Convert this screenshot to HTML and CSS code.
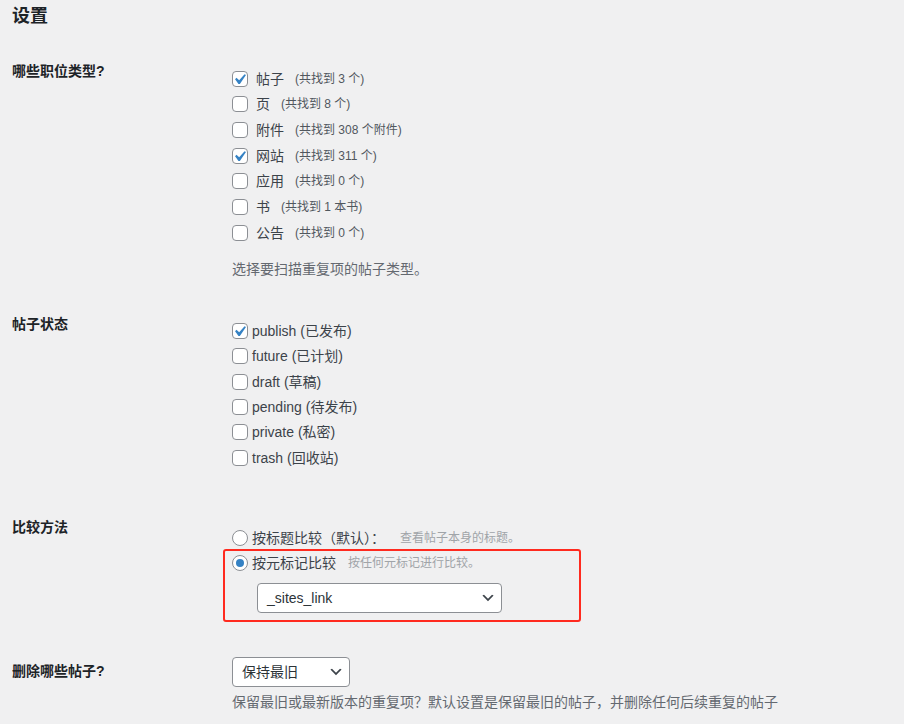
FILE: index.html
```html
<!DOCTYPE html>
<html lang="zh-CN">
<head>
<meta charset="utf-8">
<title>设置</title>
<link rel="stylesheet" href="styles.css">
</head>
<body>
<div class="page">
  <h1 class="title">设置</h1>

  <div class="row row-types">
    <div class="th">哪些职位类型?</div>
    <div class="td">
      <ul class="list list-types">
        <li class="item"><span class="cb checked"><svg viewBox="0 0 20 20"><path d="M14.83 4.89l1.34.94-5.81 8.38H9.02L5.78 9.67l1.34-1.250 2.57 2.4z"/></svg></span><span class="name">帖子</span><span class="count">(共找到 3 个)</span></li>
        <li class="item"><span class="cb"></span><span class="name">页</span><span class="count">(共找到 8 个)</span></li>
        <li class="item"><span class="cb"></span><span class="name">附件</span><span class="count">(共找到 308 个附件)</span></li>
        <li class="item"><span class="cb checked"><svg viewBox="0 0 20 20"><path d="M14.83 4.89l1.34.94-5.81 8.38H9.02L5.78 9.67l1.34-1.25 2.57 2.4z"/></svg></span><span class="name">网站</span><span class="count">(共找到 311 个)</span></li>
        <li class="item"><span class="cb"></span><span class="name">应用</span><span class="count">(共找到 0 个)</span></li>
        <li class="item"><span class="cb"></span><span class="name">书</span><span class="count">(共找到 1 本书)</span></li>
        <li class="item"><span class="cb"></span><span class="name">公告</span><span class="count">(共找到 0 个)</span></li>
      </ul>
      <p class="desc desc-types">选择要扫描重复项的帖子类型。</p>
    </div>
  </div>

  <div class="row row-status">
    <div class="th">帖子状态</div>
    <div class="td">
      <ul class="list list-status">
        <li class="item"><span class="cb checked"><svg viewBox="0 0 20 20"><path d="M14.83 4.89l1.34.94-5.81 8.38H9.02L5.78 9.67l1.34-1.25 2.57 2.4z"/></svg></span><span class="name">publish (已发布)</span></li>
        <li class="item"><span class="cb"></span><span class="name">future (已计划)</span></li>
        <li class="item"><span class="cb"></span><span class="name">draft (草稿)</span></li>
        <li class="item"><span class="cb"></span><span class="name">pending (待发布)</span></li>
        <li class="item"><span class="cb"></span><span class="name">private (私密)</span></li>
        <li class="item"><span class="cb"></span><span class="name">trash (回收站)</span></li>
      </ul>
    </div>
  </div>

  <div class="row row-compare">
    <div class="th">比较方法</div>
    <div class="td">
      <div class="radio-item"><span class="rd"></span><span class="name">按标题比较（默认）：</span><span class="hint hint-first">查看帖子本身的标题。</span></div>
      <div class="highlight">
        <div class="radio-item"><span class="rd checked"><span class="dot"></span></span><span class="name">按元标记比较</span><span class="hint">按任何元标记进行比较。</span></div>
        <div class="select select-meta"><span class="select-text">_sites_link</span><svg class="chev" viewBox="0 0 20 20"><path d="M5 6l5 5 5-5 2 1-7 7-7-7 2-1z"/></svg></div>
      </div>
    </div>
  </div>

  <div class="row row-delete">
    <div class="th th-delete">删除哪些帖子?</div>
    <div class="td">
      <div class="select select-keep"><span class="select-text">保持最旧</span><svg class="chev" viewBox="0 0 20 20"><path d="M5 6l5 5 5-5 2 1-7 7-7-7 2-1z"/></svg></div>
      <p class="desc desc-delete">保留最旧或最新版本的重复项？默认设置是保留最旧的帖子，并删除任何后续重复的帖子</p>
    </div>
  </div>
</div>
</body>
</html>
```

FILE: styles.css
```css
html, body {
  margin: 0;
  padding: 0;
  background: #f0f0f1;
}

body {
  font-family: "Liberation Sans", "Noto Sans CJK SC", sans-serif;
  color: #3c434a;
  font-size: 14px;
}

.page {
  padding: 4px 0 0 12px;
}

.title {
  margin: 0;
  font-size: 18px;
  line-height: 24px;
  font-weight: 700;
  color: #1d2327;
}

.row {
  display: grid;
  grid-template-columns: 220px 1fr;
  align-items: start;
}

.th {
  font-size: 14px;
  line-height: 20px;
  font-weight: 700;
  color: #1d2327;
}

.row-types { margin-top: 33px; }
.row-status { margin-top: 35px; }
.row-compare { margin-top: 46.3px; }
.row-delete { margin-top: 35px; }

.row-types .td { padding-top: 5px; }
.row-status .td { padding-top: 4.5px; }
.row-compare .td { padding-top: 9px; }
.th-delete { padding-top: 4px; }

.list {
  list-style: none;
  margin: 0;
  padding: 0;
}

.item {
  display: flex;
  align-items: center;
  white-space: nowrap;
}

.list-types .item { height: 25.67px; }
.list-status .item { height: 25.4px; }

.cb {
  position: relative;
  box-sizing: border-box;
  width: 16px;
  height: 16px;
  flex: none;
  border: 1px solid #8c8f94;
  border-radius: 4px;
  background: #fff;
}

.cb svg {
  position: absolute;
  left: -4px;
  top: -3px;
  width: 21px;
  height: 21px;
  fill: #3582c4;
}

.list-types .name { margin-left: 8px; }
.list-status .name { margin-left: 4px; }

.name {
  font-size: 14px;
  line-height: 20px;
  color: #3c434a;
}

.count {
  margin-left: 11px;
  font-size: 12px;
  line-height: 20px;
  color: #50575e;
}

.desc {
  margin: 0;
  font-size: 14px;
  line-height: 20px;
  color: #646970;
  white-space: nowrap;
}

.desc-types { margin-top: 13px; }
.desc-delete { margin-top: 5.5px; }

.radio-item {
  display: flex;
  align-items: center;
  height: 24px;
  white-space: nowrap;
}

.rd {
  box-sizing: border-box;
  width: 16px;
  height: 16px;
  flex: none;
  border: 1px solid #8c8f94;
  border-radius: 50%;
  background: #fff;
  display: flex;
  align-items: center;
  justify-content: center;
}

.dot {
  width: 8px;
  height: 8px;
  border-radius: 50%;
  background: #3582c4;
}

.radio-item .name { margin-left: 4px; }

.hint {
  margin-left: 12px;
  font-size: 12px;
  line-height: 20px;
  color: #a0a4a8;
}

.hint-first { margin-left: 15px; }

.highlight {
  box-sizing: border-box;
  width: 358px;
  margin: -1px 0 0 -9px;
  padding: 0 0 7px 7px;
  border: 2px solid #ff2a1f;
  border-radius: 3px;
}

.select {
  box-sizing: border-box;
  display: flex;
  align-items: center;
  justify-content: space-between;
  height: 30px;
  padding: 0 5px 0 9px;
  background: #fff;
  border: 1px solid #8c8f94;
  border-radius: 4px;
  color: #2c3338;
  font-size: 14px;
}

.select-meta {
  width: 245px;
  margin: 8px 0 0 25px;
}

.select-keep {
  width: 118px;
}

.select-text {
  line-height: 20px;
  white-space: nowrap;
}

.chev {
  width: 16px;
  height: 16px;
  flex: none;
  fill: #3c434a;
}
```
